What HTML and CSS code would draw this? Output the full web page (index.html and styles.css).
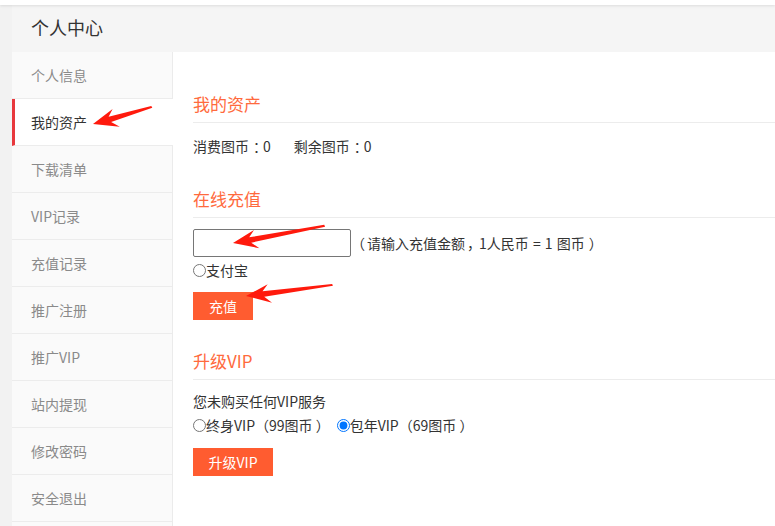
FILE: index.html
```html
<!DOCTYPE html>
<html lang="zh-CN">
<head>
<meta charset="utf-8">
<title>个人中心</title>
<link rel="stylesheet" href="styles.css">
</head>
<body>
<div class="topbar"></div>
<div class="page">
  <div class="wrap">
    <div class="head">个人中心</div>
    <div class="main">
      <ul class="side">
        <li class="item">个人信息</li>
        <li class="item active">我的资产</li>
        <li class="item">下载清单</li>
        <li class="item">VIP记录</li>
        <li class="item">充值记录</li>
        <li class="item">推广注册</li>
        <li class="item">推广VIP</li>
        <li class="item">站内提现</li>
        <li class="item">修改密码</li>
        <li class="item">安全退出</li>
      </ul>
      <div class="content">
        <h3 class="title">我的资产</h3>
        <p class="assets"><span class="stat">消费图币<span class="pc">：</span>0</span><span>剩余图币<span class="pc">：</span>0</span></p>

        <h3 class="title">在线充值</h3>
        <div class="charge-row"><input class="amount" type="text"><span class="hint"><span class="po">（</span>请输入充值金额<span class="pm">，</span>1人民币 = 1 图币 ）</span></div>
        <label class="radio-row"><input class="radio" type="radio" name="pay">支付宝</label>
        <button class="btn btn-charge">充值</button>

        <h3 class="title">升级VIP</h3>
        <p class="vip-note">您未购买任何VIP服务</p>
        <div class="radio-row">
          <label><input class="radio" type="radio" name="vip">终身VIP（99图币 ）</label>
          <label class="opt2"><input class="radio" type="radio" name="vip" checked>包年VIP（69图币 ）</label>
        </div>
        <button class="btn btn-vip">升级VIP</button>
      </div>
    </div>
  </div>
</div>
<svg class="arrows" width="775" height="526" viewBox="0 0 775 526">
  <polygon fill="#ff1a0d" transform="translate(93,124) rotate(-16.1)" points="0,0 23,-9 17,-2.6 61,-1.2 61.5,0.8 18,3 25,10"/>
  <polygon fill="#ff1a0d" transform="translate(233,243) rotate(-10.5)" points="0,0 23,-9 17,-2.6 93,-1.2 93.5,0.8 18,3 25,10"/>
  <polygon fill="#ff1a0d" transform="translate(246,296) rotate(-7.2)" points="0,0 23,-9 17,-2.6 87,-1.2 87.5,0.8 18,3 25,10"/>
</svg>
</body>
</html>
```
FILE: styles.css
```css
* { box-sizing: border-box; }
html, body { margin: 0; padding: 0; }
body {
  background: #f2f2f2;
  font-family: "Noto Sans CJK SC", "Noto Sans", sans-serif;
  color: #333;
  font-size: 14px;
  width: 775px;
  height: 526px;
  overflow: hidden;
  position: relative;
}
.pc { padding-left: 4px; letter-spacing: -4px; }
.po { margin-left: -3px; padding-right: 2px; }
.pm { padding-left: 2px; letter-spacing: -2px; }
.topbar {
  height: 5px;
  background: #fff;
  box-shadow: 0 1px 3px rgba(0,0,0,0.10);
  position: relative;
  z-index: 1;
}
.page { padding-left: 12px; }
.wrap { background: #f5f5f5; }
.head {
  height: 47px;
  padding-left: 19px;
  line-height: 45px;
  font-size: 18px;
  color: #333;
}
.main { display: flex; align-items: stretch; height: 480px; }
.side {
  list-style: none;
  margin: 0;
  padding: 0;
  width: 161px;
  background: #fafafa;
  border-right: 1px solid #ebebeb;
  flex: none;
}
.item {
  height: 47px;
  line-height: 46px;
  border-bottom: 1px solid #ececec;
  padding-left: 19px;
  font-size: 14px;
  color: #8a8a8a;
}
.item.active {
  background: #fff;
  color: #333;
  border-left: 3px solid #e8383d;
  padding-left: 16px;
  margin-right: -1px;
  position: relative;
}
.content {
  flex: 1;
  background: #fff;
  padding: 30px 0 0 20px;
}
.title {
  margin: 0;
  padding-top: 3px;
  height: 41px;
  line-height: 37px;
  font-size: 17px;
  font-weight: normal;
  color: #ff6a3d;
  border-bottom: 1px solid #ececec;
}
.assets {
  margin: 11px 0 19px;
  line-height: 24px;
  white-space: pre;
}
.stat { margin-right: 23px; }
.charge-row {
  display: flex;
  align-items: center;
  margin-top: 11px;
  height: 28px;
}
.amount {
  width: 158px;
  height: 28px;
  border: 1px solid #767676;
  border-radius: 2px;
  margin: 0 3px 0 0;
  padding: 0 4px;
}
.hint { color: #333; white-space: pre; word-spacing: 1px; }
.radio-row {
  display: flex;
  align-items: center;
  height: 24px;
  line-height: 24px;
  margin-top: 1px;
}
.radio-row label { display: flex; align-items: center; white-space: pre; }
.radio {
  margin: 1px 0 0 0;
  width: 13px;
  height: 13px;
}
.opt2 { margin-left: 7px; }
.btn {
  display: block;
  border: none;
  background: #ff5c30;
  color: #fff;
  font-family: inherit;
  font-size: 14px;
  height: 28px;
  padding: 0;
}
.btn-charge { width: 60px; margin: 10px 0 19px; }
.btn-vip { width: 80px; margin-top: 11px; }
.vip-note { margin: 10px 0 0; line-height: 22px; }
.arrows {
  position: absolute;
  left: 0;
  top: 0;
  pointer-events: none;
}
```
